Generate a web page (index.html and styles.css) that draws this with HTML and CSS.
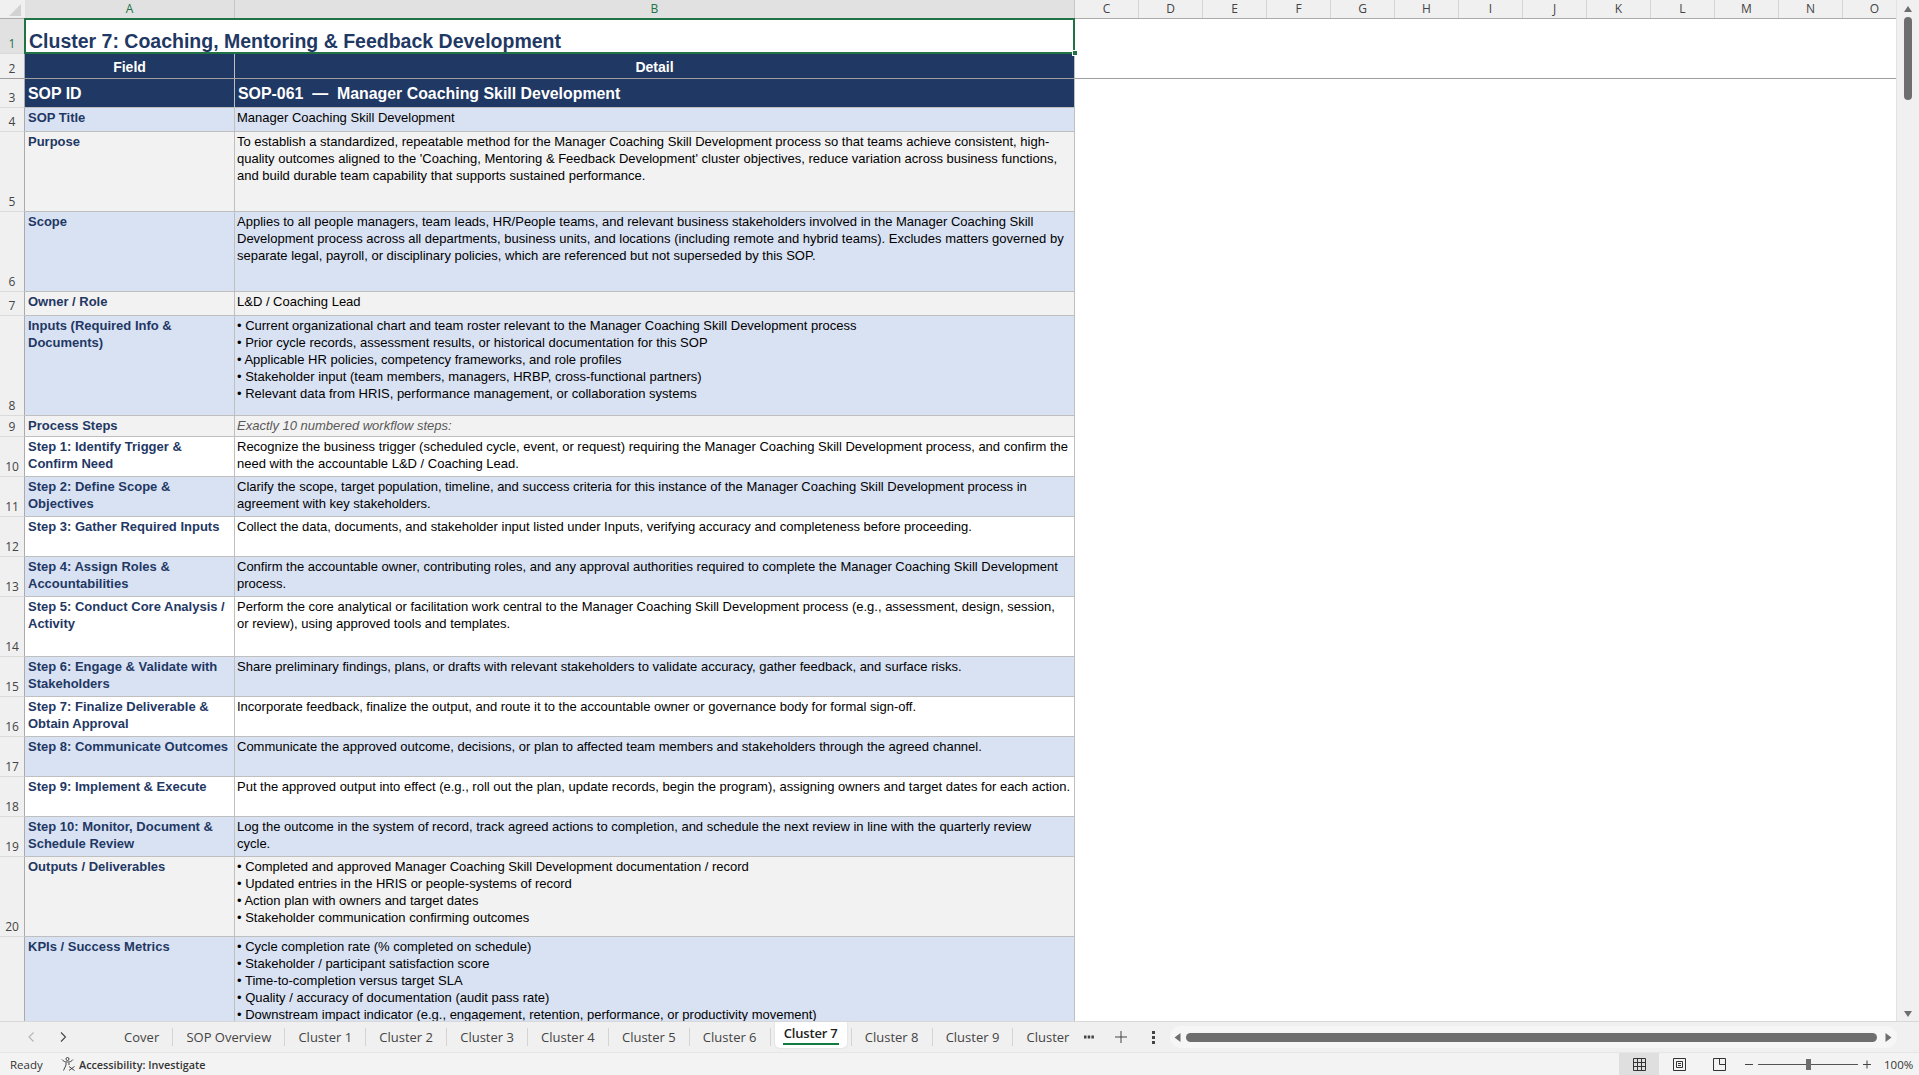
FILE: index.html
```html
<!DOCTYPE html>
<html lang="en">
<head>
<meta charset="utf-8">
<title>Cluster 7</title>
<link rel="stylesheet" href="styles.css">
</head>
<body>
<div class="app">
  <div class="workspace">
    <div class="sheet">
      <div class="col-headers">
        <div class="corner"><svg width="14" height="14" viewBox="0 0 14 14"><path d="M14 2V14H2Z" fill="#d2d2d2"/></svg></div>
        <div class="col sel w-a">A</div>
        <div class="col sel w-b">B</div>
        <div class="col">C</div><div class="col">D</div><div class="col">E</div><div class="col">F</div><div class="col">G</div><div class="col">H</div><div class="col">I</div><div class="col">J</div><div class="col">K</div><div class="col">L</div><div class="col">M</div><div class="col">N</div><div class="col">O</div>
      </div>
      <div class="rows">
        <div class="row h35 r1"><div class="num cur">1</div><div class="title">Cluster 7: Coaching, Mentoring &amp; Feedback Development</div><span class="handle"></span></div>
        <div class="row h25 frozen"><div class="num">2</div><div class="c head">Field</div><div class="c head">Detail</div></div>
        <div class="row h29"><div class="num">3</div><div class="c sop">SOP ID</div><div class="c sop sopb">SOP-061&nbsp; —&nbsp; Manager Coaching Skill Development</div></div>
        <div class="row h24 blue"><div class="num">4</div><div class="c f">SOP Title</div><div class="c d">Manager Coaching Skill Development</div></div>
        <div class="row h80 gray"><div class="num">5</div><div class="c f">Purpose</div><div class="c d">To establish a standardized, repeatable method for the Manager Coaching Skill Development process so that teams achieve consistent, high-<br>quality outcomes aligned to the 'Coaching, Mentoring &amp; Feedback Development' cluster objectives, reduce variation across business functions,<br>and build durable team capability that supports sustained performance.</div></div>
        <div class="row h80 blue"><div class="num">6</div><div class="c f">Scope</div><div class="c d">Applies to all people managers, team leads, HR/People teams, and relevant business stakeholders involved in the Manager Coaching Skill<br>Development process across all departments, business units, and locations (including remote and hybrid teams). Excludes matters governed by<br>separate legal, payroll, or disciplinary policies, which are referenced but not superseded by this SOP.</div></div>
        <div class="row h24 gray"><div class="num">7</div><div class="c f">Owner / Role</div><div class="c d">L&amp;D / Coaching Lead</div></div>
        <div class="row h100 blue"><div class="num">8</div><div class="c f">Inputs (Required Info &amp;<br>Documents)</div><div class="c d">• Current organizational chart and team roster relevant to the Manager Coaching Skill Development process<br>• Prior cycle records, assessment results, or historical documentation for this SOP<br>• Applicable HR policies, competency frameworks, and role profiles<br>• Stakeholder input (team members, managers, HRBP, cross-functional partners)<br>• Relevant data from HRIS, performance management, or collaboration systems</div></div>
        <div class="row h21 gray"><div class="num">9</div><div class="c f">Process Steps</div><div class="c d note">Exactly 10 numbered workflow steps:</div></div>
        <div class="row h40"><div class="num">10</div><div class="c f">Step 1: Identify Trigger &amp;<br>Confirm Need</div><div class="c d">Recognize the business trigger (scheduled cycle, event, or request) requiring the Manager Coaching Skill Development process, and confirm the<br>need with the accountable L&amp;D / Coaching Lead.</div></div>
        <div class="row h40 blue"><div class="num">11</div><div class="c f">Step 2: Define Scope &amp;<br>Objectives</div><div class="c d">Clarify the scope, target population, timeline, and success criteria for this instance of the Manager Coaching Skill Development process in<br>agreement with key stakeholders.</div></div>
        <div class="row h40"><div class="num">12</div><div class="c f">Step 3: Gather Required Inputs</div><div class="c d">Collect the data, documents, and stakeholder input listed under Inputs, verifying accuracy and completeness before proceeding.</div></div>
        <div class="row h40 blue"><div class="num">13</div><div class="c f">Step 4: Assign Roles &amp;<br>Accountabilities</div><div class="c d">Confirm the accountable owner, contributing roles, and any approval authorities required to complete the Manager Coaching Skill Development<br>process.</div></div>
        <div class="row h60"><div class="num">14</div><div class="c f">Step 5: Conduct Core Analysis /<br>Activity</div><div class="c d">Perform the core analytical or facilitation work central to the Manager Coaching Skill Development process (e.g., assessment, design, session,<br>or review), using approved tools and templates.</div></div>
        <div class="row h40 blue"><div class="num">15</div><div class="c f">Step 6: Engage &amp; Validate with<br>Stakeholders</div><div class="c d">Share preliminary findings, plans, or drafts with relevant stakeholders to validate accuracy, gather feedback, and surface risks.</div></div>
        <div class="row h40"><div class="num">16</div><div class="c f">Step 7: Finalize Deliverable &amp;<br>Obtain Approval</div><div class="c d">Incorporate feedback, finalize the output, and route it to the accountable owner or governance body for formal sign-off.</div></div>
        <div class="row h40 blue"><div class="num">17</div><div class="c f">Step 8: Communicate Outcomes</div><div class="c d">Communicate the approved outcome, decisions, or plan to affected team members and stakeholders through the agreed channel.</div></div>
        <div class="row h40"><div class="num">18</div><div class="c f">Step 9: Implement &amp; Execute</div><div class="c d">Put the approved output into effect (e.g., roll out the plan, update records, begin the program), assigning owners and target dates for each action.</div></div>
        <div class="row h40 blue"><div class="num">19</div><div class="c f">Step 10: Monitor, Document &amp;<br>Schedule Review</div><div class="c d">Log the outcome in the system of record, track agreed actions to completion, and schedule the next review in line with the quarterly review<br>cycle.</div></div>
        <div class="row h80 gray"><div class="num">20</div><div class="c f">Outputs / Deliverables</div><div class="c d">• Completed and approved Manager Coaching Skill Development documentation / record<br>• Updated entries in the HRIS or people-systems of record<br>• Action plan with owners and target dates<br>• Stakeholder communication confirming outcomes</div></div>
        <div class="row h100 blue"><div class="num"></div><div class="c f">KPIs / Success Metrics</div><div class="c d">• Cycle completion rate (% completed on schedule)<br>• Stakeholder / participant satisfaction score<br>• Time-to-completion versus target SLA<br>• Quality / accuracy of documentation (audit pass rate)<br>• Downstream impact indicator (e.g., engagement, retention, performance, or productivity movement)</div></div>
      </div>
    </div>
    <div class="vscroll">
      <svg width="8" height="6" viewBox="0 0 8 6"><path d="M4 0L8 6H0Z" fill="#6e6e6e"/></svg>
      <div class="vthumb"></div>
      <svg class="end" width="8" height="6" viewBox="0 0 8 6"><path d="M4 6L8 0H0Z" fill="#6e6e6e"/></svg>
    </div>
  </div>
  <div class="tabbar">
    <div class="nav">
      <svg width="10" height="12" viewBox="0 0 10 12"><path d="M7.500 1.500L3 6L7.500 10.500" fill="none" stroke="#b4b4b4" stroke-width="1.100"/></svg>
      <svg width="10" height="12" viewBox="0 0 10 12"><path d="M3 1.500L7.500 6L3 10.500" fill="none" stroke="#444" stroke-width="1.100"/></svg>
    </div>
    <div class="tabs">
      <div class="tab">Cover</div><div class="tab">SOP Overview</div><div class="tab">Cluster 1</div><div class="tab">Cluster 2</div><div class="tab">Cluster 3</div><div class="tab">Cluster 4</div><div class="tab">Cluster 5</div><div class="tab">Cluster 6</div>
      <div class="tab active"><span class="card"><span class="lbl">Cluster 7</span></span></div>
      <div class="tab">Cluster 8</div><div class="tab">Cluster 9</div><div class="tab cut">Cluster 10</div>
    </div>
    <div class="tools">
      <svg width="10" height="4" viewBox="0 0 10 4"><path d="M0 .5h2.500v3H0zM3.700 .5h2.500v3H3.700zM7.400 .5h2.500v3H7.400z" fill="#444"/></svg>
      <svg class="plus" width="12" height="12" viewBox="0 0 12 12"><path d="M6 0V12M0 6H12" stroke="#444" stroke-width="1"/></svg>
      <svg class="more" width="3" height="13" viewBox="0 0 3 13"><path d="M0 0h3v3H0zM0 5h3v3H0zM0 10h3v3H0z" fill="#444"/></svg>
    </div>
    <div class="hscroll">
      <svg width="7" height="9" viewBox="0 0 7 9"><path d="M6.500 0V9L.5 4.500Z" fill="#6e6e6e"/></svg>
      <div class="hthumb"></div>
      <svg class="hnext" width="7" height="9" viewBox="0 0 7 9"><path d="M.5 0V9L6.500 4.500Z" fill="#6e6e6e"/></svg>
    </div>
  </div>
  <div class="status">
    <span class="ready">Ready</span>
    <svg class="a11y" width="15" height="14" viewBox="0 0 15 14"><g fill="none" stroke="#333" stroke-width=".9"><circle cx="6.500" cy="2" r="1.500"/><path d="M1 2.500C2.500 4.500 4 5 6.500 5S10.500 4.500 12 2.500M5 5.500V8L2.500 13.500M8 5.500V8"/><path d="M8 9.500L13.500 13.500M13.500 9.500L8 13.500"/></g></svg>
    <span class="acc">Accessibility: Investigate</span>
    <div class="views">
      <div class="view on"><svg width="13" height="13" viewBox="0 0 13 13"><path d="M.5 .5H12.500V12.500H.5ZM.5 4.500H12.500M.5 8.500H12.500M4.500 .5V12.500M8.500 .5V12.500" fill="none" stroke="#333"/></svg></div>
      <div class="view"><svg width="13" height="13" viewBox="0 0 13 13"><path d="M.5 .5H12.500V12.500H.5ZM3.500 3.500H9.500V9.500H3.500ZM5 5.500H8M5 7.500H8" fill="none" stroke="#333"/></svg></div>
      <div class="view"><svg width="13" height="13" viewBox="0 0 13 13"><path d="M.5 .5H12.500V12.500H.5ZM6.500 .5V6.500H12.500" fill="none" stroke="#333"/></svg></div>
    </div>
    <div class="zoom">
      <svg width="8" height="9" viewBox="0 0 8 9"><path d="M0 4.500H8" stroke="#444"/></svg>
      <div class="slider"><span class="knob"></span></div>
      <svg width="8" height="9" viewBox="0 0 8 9"><path d="M0 4.500H8M4 .5V8.500" stroke="#444"/></svg>
      <span class="pct">100%</span>
    </div>
  </div>
</div>
</body>
</html>
```
FILE: styles.css
```css
* { box-sizing: border-box; }
html, body { margin: 0; height: 100%; overflow: hidden; background: #f0f0f0; }
body { font-family: "Liberation Sans", Arial, sans-serif; font-size: 13px; color: #000; }
.app { height: 1075px; display: flex; flex-direction: column; }
.workspace { height: 1022px; display: flex; border-bottom: 1px solid #d8d8d8; }
.sheet { width: 1897px; background: #fff; overflow: hidden; display: flex; flex-direction: column; border-right: 1px solid #e3e3e3; }

.col-headers { display: flex; height: 19px; flex: none; font-family: "Open Sans", "Liberation Sans", sans-serif; font-size: 12px; color: #444; background: #f0f0f0; border-bottom: 1px solid #ababab; }
.corner { width: 25px; flex: none; display: flex; align-items: flex-end; justify-content: flex-end; padding: 0 4px 2px 0; }
.col { width: 64px; flex: none; text-align: center; line-height: 18px; border-right: 1px solid #d4d4d4; }
.col.sel { background: #e1e1e1; color: #217346; border-right-color: #c6c6c6; }
.col.w-a { width: 210px; }
.col.w-b { width: 840px; }

.rows { flex: none; position: relative; }
.row { display: grid; grid-template-columns: 25px 210px 840px; overflow: hidden; }
.h21 { height: 21px; } .h24 { height: 24px; } .h25 { height: 25px; } .h29 { height: 29px; } .h35 { height: 35px; }
.h40 { height: 40px; } .h60 { height: 60px; } .h80 { height: 80px; } .h100 { height: 100px; }

.num { background: #f0f0f0; color: #444; font-family: "Open Sans", "Liberation Sans", sans-serif; font-size: 12px; line-height: 16px; text-align: center; display: flex; align-items: flex-end; justify-content: center; border-right: 1px solid #ababab; border-bottom: 1px solid #dadada; padding-bottom: 1px; }
.num.cur { background: #e1e1e1; color: #217346; }

.c { border-right: 1px solid #bfbfbf; border-bottom: 1px solid #bfbfbf; white-space: nowrap; overflow: hidden; line-height: 17px; padding: 1px 3px 0; }
.f { font-weight: 700; color: #1f3864; }
.d { padding-left: 2px; }
.blue .c { background: #d9e2f3; }
.gray .c { background: #f2f2f2; }
.note { font-style: italic; color: #595959; }

.r1 { overflow: visible; position: relative; z-index: 2; }
.title { grid-column: 2 / 4; border: 2px solid #217346; font-weight: 700; font-size: 19.500px; color: #1f3864; line-height: 22px; padding: 10px 2px 0 3px; background: #fff; white-space: nowrap; margin: -1px 0 0 -1px; height: 36px; }
.handle { position: absolute; left: 1072px; top: 31px; width: 6px; height: 6px; background: #217346; border: 1px solid #fff; }

.frozen { position: relative; z-index: 1; grid-template-columns: 25px 210px 840px 822px; }
.frozen::after { content: ""; grid-column: 4; border-bottom: 1px solid #9e9e9e; }
.head, .sop { background: #1f3864; color: #fff; font-weight: 700; border-color: #bfbfbf; padding-top: 0; }
.frozen .num, .frozen .c { border-bottom-color: #9e9e9e; }
.head { font-size: 14px; line-height: 26px; text-align: center; }
.sop { font-size: 15.900px; line-height: 30px; }
.sopb { padding-left: 3px; }

.vscroll { width: 22px; flex: none; display: flex; flex-direction: column; align-items: center; background: #f0f0f0; padding: 6px 0 4px; }
.vthumb { width: 8px; height: 83px; margin-top: 5px; background: #6e6e6e; border-radius: 4px; }
.end { margin-top: auto; }

.tabbar { height: 31px; display: flex; align-items: center; background: #f0f0f0; border-bottom: 1px solid #e6e6e6; flex: none; }
.nav { width: 111px; flex: none; display: flex; gap: 22px; padding-left: 26px; }
.tabs { width: 962px; flex: none; display: flex; align-items: center; overflow: hidden; font-family: "Open Sans", "Liberation Sans", sans-serif; font-size: 13px; color: #444; height: 100%; }
.tab { padding: 0 13.100px; white-space: nowrap; border-right: 1px solid #d4d4d4; line-height: 18px; flex: none; }
.tab.cut { border-right: 0; }
.tab.active { padding: 0 4px; color: #222; font-weight: 600; overflow: visible; }
.card { display: block; width: 72px; height: 27px; margin-top: -7px; margin-bottom: -2px; padding: 0 8px; background: #fff; border-radius: 0 0 5px 5px; box-shadow: 0 0 2px #cfcfcf; text-align: center; }
.lbl { display: block; height: 24px; line-height: 25px; border-bottom: 2px solid #107c41; white-space: nowrap; letter-spacing: -.2px; }
.tools { width: 97px; flex: none; display: flex; align-items: center; padding-left: 11px; }
.plus { margin-left: 21px; }
.more { margin-left: 25px; }
.hscroll { flex: 1; display: flex; align-items: center; gap: 5px; background: #f6f6f6; height: 22px; border-radius: 11px; padding: 0 5px 0 4px; margin-right: 22px; }
.hthumb { flex: 1; height: 9px; background: #6e6e6e; border-radius: 5px; }
.hnext { margin-left: 3px; }

.status { flex: 1; display: flex; align-items: center; background: #f3f3f3; font-family: "Open Sans", "Liberation Sans", sans-serif; font-size: 11.500px; color: #333; padding-left: 10px; }
.ready { width: 51px; }
.a11y { margin-right: 3px; }
.acc { font-weight: 600; font-size: 10.800px; }
.views { margin-left: auto; display: flex; height: 100%; }
.view { width: 40px; display: flex; align-items: center; justify-content: center; }
.view.on { background: #dfdfdf; }
.zoom { display: flex; align-items: center; margin-left: 6px; gap: 5px; padding-right: 8px; }
.slider { width: 100px; height: 1px; background: #555; position: relative; }
.knob { position: absolute; left: 48px; top: -5px; width: 5px; height: 11px; background: #6e6e6e; }
.pct { width: 27px; margin-left: 8px; white-space: nowrap; }
```
